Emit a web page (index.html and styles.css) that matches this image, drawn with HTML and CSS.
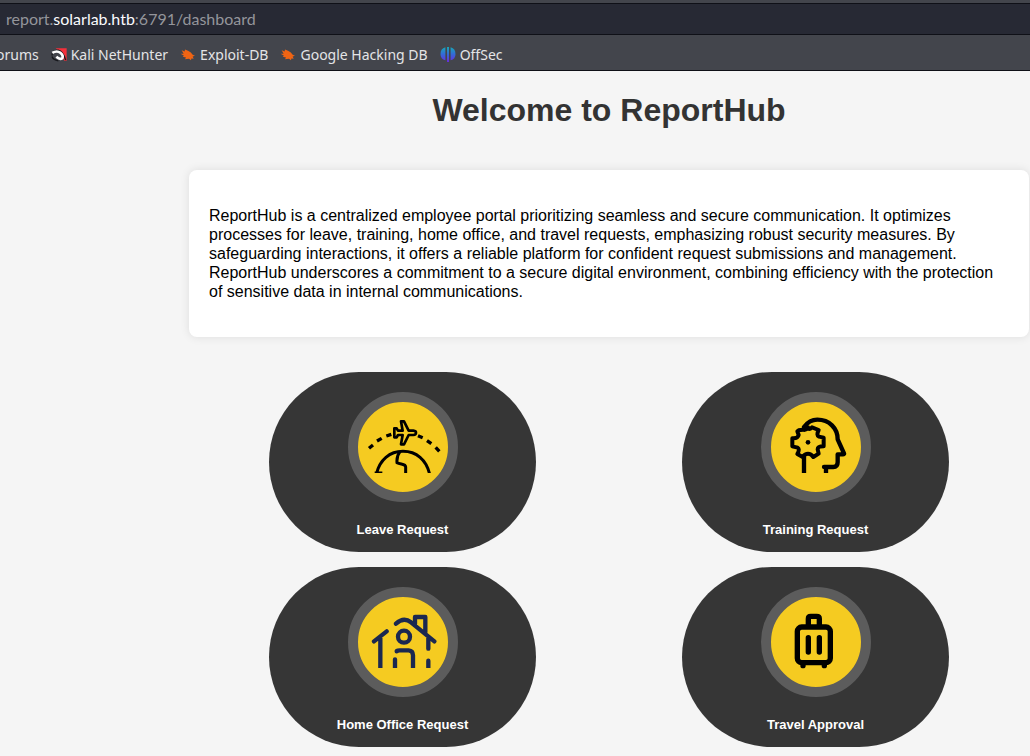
FILE: index.html
```html
<!DOCTYPE html>
<html lang="en">
<head>
<meta charset="utf-8">
<title>ReportHub</title>
<link rel="stylesheet" href="styles.css">
</head>
<body>
<header class="browser">
  <div class="url-bar" role="textbox" aria-label="Address" contenteditable="true" spellcheck="false">report.<span class="url-host">solarlab.htb</span>:6791/dashboard</div>
  <nav class="bookmarks" aria-label="Bookmarks">
    <a class="bookmark" href="#">orums</a>
    <a class="bookmark" href="#">
      <svg class="favicon" viewBox="0 0 48 42" aria-hidden="true"><path d="M14 2H47V40H40L26 12Z" fill="#f5303b"/><path d="M3 24Q3 8 22 8Q36 10 44 38" fill="none" stroke="#17181c" stroke-width="4"/><path d="M4 16Q18 8 28 16Q38 25 34 32Q27 38 16 28" fill="none" stroke="#fff" stroke-width="8"/><path d="M3 27Q6 37 22 40" fill="none" stroke="#17181c" stroke-width="4"/></svg>
      Kali NetHunter</a>
    <a class="bookmark" href="#">
      <svg class="favicon" viewBox="0 0 48 42" aria-hidden="true"><path d="M5 8L14 12L15 6L24 10Q34 14 38 22L45 25L38 27L41 34L34 33L33 38L27 34L15 35L18 30L8 28L12 25L2 19L11 19Z" fill="#ef6414"/></svg>
      Exploit-DB</a>
    <a class="bookmark" href="#">
      <svg class="favicon" viewBox="0 0 48 42" aria-hidden="true"><path d="M5 8L14 12L15 6L24 10Q34 14 38 22L45 25L38 27L41 34L34 33L33 38L27 34L15 35L18 30L8 28L12 25L2 19L11 19Z" fill="#ef6414"/></svg>
      Google Hacking DB</a>
    <a class="bookmark" href="#">
      <svg class="favicon" viewBox="0 0 48 46" aria-hidden="true"><defs><linearGradient id="offsec" x1="0" y1="0" x2="0" y2="46" gradientUnits="userSpaceOnUse"><stop offset="0" stop-color="#16a9b8"/><stop offset=".5" stop-color="#3568d8"/><stop offset="1" stop-color="#6a2be0"/></linearGradient></defs><path d="M16 1V41Q1 37 1 22Q1 5 16 1ZM21 0H27V46H21ZM32 1Q47 5 47 22Q47 37 32 41Z" fill="url(#offsec)"/></svg>
      OffSec</a>
  </nav>
</header>
<main class="page">
  <h1 class="title">Welcome to ReportHub</h1>
  <section class="intro">
    <p>ReportHub is a centralized employee portal prioritizing seamless and secure communication. It optimizes processes for leave, training, home office, and travel requests, emphasizing robust security measures. By safeguarding interactions, it offers a reliable platform for confident request submissions and management. ReportHub underscores a commitment to a secure digital environment, combining efficiency with the protection of sensitive data in internal communications.</p>
  </section>
  <nav class="cards" aria-label="Requests">
    <a class="card" href="#">
      <span class="badge">
        <svg class="icon" viewBox="51 51 270 270" aria-hidden="true">
          <clipPath id="crop"><path d="M51 51H321V264H51Z"/></clipPath>
          <g clip-path="url(#crop)" fill="none" stroke="#000" stroke-width="9">
            <path d="M84 190L96 180M108 168L122 160M136 153L151 148M231 152L245 158M258 167L271 176M284 187L295 199" stroke-width="10"/>
            <path d="M106 268C116 224 146 199 186 199S256 224 266 268M101 264H124"/>
            <path d="M177 200C169 210 167 222 168 233C178 239 194 235 194 246V268"/>
            <path d="M180 109H189L203 137H217Q225 138 225 143Q225 149 217 150H203L189 178H180L185 150H171L167 157H160V130H167L171 137H185Z" stroke-width="8" stroke-linejoin="round"/>
          </g>
        </svg>
      </span>
      <span class="label">Leave Request</span>
    </a>
    <a class="card" href="#">
      <span class="badge">
        <svg class="icon" viewBox="51 51 270 270" aria-hidden="true">
          <g clip-path="url(#crop)" fill="none" stroke="#000" stroke-width="13" stroke-linejoin="round" stroke-linecap="round">
            <path d="M150 126C162 110 175 104 190 104C226 104 251 130 251 163L270 205Q271 208 267 208H251V232Q251 246 238 246H210M216 248V275M150 213V275"/>
            <path d="M134 136L146 134Q156 137 162 127Q164 137 174 127L194 135Q186 151 195 155L209 158V184Q191 184 191 193L194 206L178 216Q171 206 162 206Q153 206 146 216L130 207Q138 192 131 188L115 184V160Q132 161 134 150L130 139Z" stroke-width="12"/>
            <circle cx="162" cy="172" r="7" fill="#000" stroke="none"/>
          </g>
        </svg>
      </span>
      <span class="label">Training Request</span>
    </a>
    <a class="card" href="#">
      <span class="badge">
        <svg class="icon" viewBox="51 51 270 270" aria-hidden="true">
          <g clip-path="url(#crop)" fill="none" stroke="#1b2850" stroke-width="13" stroke-linejoin="round" stroke-linecap="round">
            <path d="M99 184L137 154M118 174V275M165 131Q188 110 210 127L280 184M222 133V111H253V157M262 174V206M262 242V275M162 238V275M167 214Q167 211 176 211H203Q216 212 216 226V275"/>
            <circle cx="189" cy="170" r="18"/>
          </g>
        </svg>
      </span>
      <span class="label">Home Office Request</span>
    </a>
    <a class="card" href="#">
      <span class="badge">
        <svg class="icon" viewBox="51 51 270 270" aria-hidden="true">
          <g fill="none" stroke="#000" stroke-width="16" stroke-linejoin="round" stroke-linecap="round">
            <rect x="130" y="141" width="99" height="107" rx="13"/>
            <path d="M163 137V116Q163 109 170 109H188Q196 109 196 116V137"/>
            <path d="M163 173V216M196 173V216M147 254V257M211 254V257"/>
          </g>
        </svg>
      </span>
      <span class="label">Travel Approval</span>
    </a>
  </nav>
</main>
</body>
</html>
```
FILE: styles.css
```css
* { box-sizing: border-box; }

body {
  margin: 0;
  background: #f5f5f5;
  color: #000;
  font: 16px/19px "Liberation Sans", Arial, sans-serif;
}

.browser {
  background: #43454c;
  border-bottom: 1px solid #0f1017;
  padding-top: 3px;
  font-family: "Noto Sans", sans-serif;
  font-size: 14px;
  overflow: hidden;
}

.url-bar {
  height: 32px;
  padding: 0 6px;
  background: #272934;
  border: solid #0f1017;
  border-width: 1px 0;
  color: #94959b;
  font-family: Lato, "Noto Sans", sans-serif;
  font-size: 16px;
  line-height: 30px;
  white-space: nowrap;
}

.url-host { color: #fbfbfe; }

.bookmarks {
  display: flex;
  gap: 12px;
  height: 35px;
  margin-left: -4px;
  padding-top: 4px;
  align-items: center;
}

.bookmark {
  display: flex;
  align-items: center;
  gap: 4px;
  color: #e4e4e6;
  text-decoration: none;
  white-space: nowrap;
}

.favicon { width: 16px; height: 15px; }

.page { margin: 0 1px 0 189px; }

.title {
  margin: 0;
  padding: 21px 0 41px;
  color: #333;
  font-size: 32px;
  line-height: 37px;
  text-align: center;
}

.intro {
  padding: 20px;
  background: #fff;
  border-radius: 8px;
  box-shadow: 0 0 10px rgba(0, 0, 0, 0.1);
}

.intro p { margin: 16px 0; }

.cards {
  display: grid;
  grid-template-columns: 267px 267px;
  justify-content: center;
  gap: 15px 146px;
  padding: 35px 0 9px;
}

.card {
  display: flex;
  flex-direction: column;
  align-items: center;
  gap: 18px;
  height: 180px;
  padding-top: 20px;
  background: #363636;
  border-radius: 90px;
  color: #fff;
  font-size: 13px;
  font-weight: bold;
  text-decoration: none;
}

.badge {
  width: 110px;
  height: 110px;
  border: 10px solid #5c5c5c;
  border-radius: 50%;
  background: #f5cb21;
}

.icon { display: block; width: 90px; height: 90px; }
```
